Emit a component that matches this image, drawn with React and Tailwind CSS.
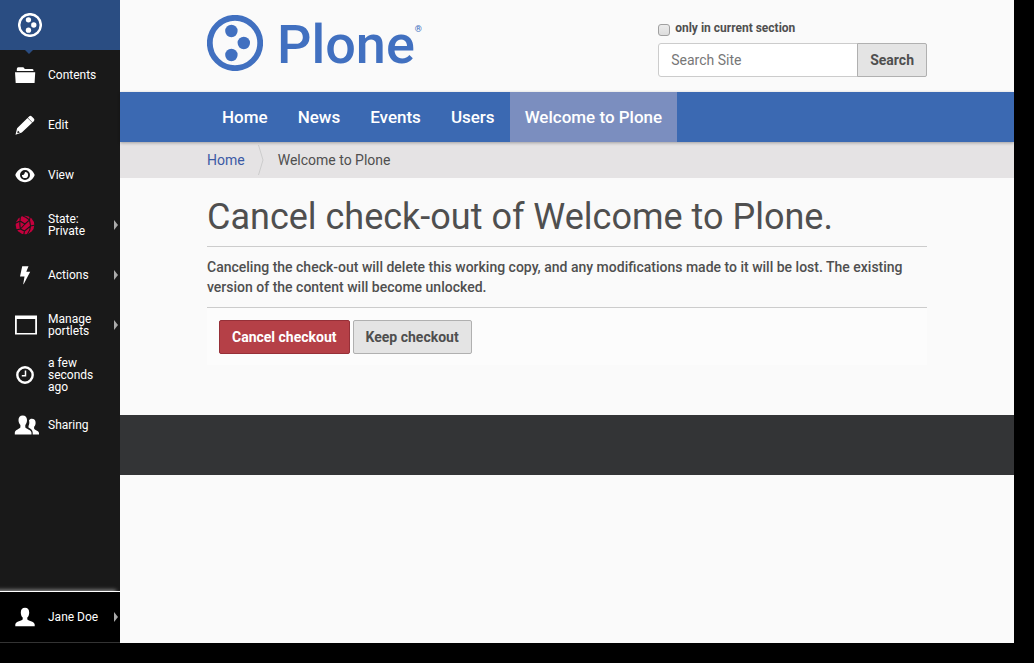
import React from "react";

function PloneMark({ className }) {
  return (
    <svg viewBox="0 0 56 56" className={className} fill="currentColor" aria-hidden="true">
      <circle cx="28" cy="28" r="25.2" fill="none" stroke="currentColor" strokeWidth="5.8" />
      <circle cx="24.4" cy="16" r="6.2" />
      <circle cx="36.8" cy="28" r="6.2" />
      <circle cx="24.4" cy="40" r="6.2" />
    </svg>
  );
}

const icons = {
  folder: (
    <>
      <path d="M3.800 4Q3.800 2.200 5.300 2.200H9.800q1 0 1.500 1l.4.800H19q1.500 0 1.500 1.400V6H3.800z" />
      <path d="M2 7.300H22.200L21.600 18H2.700z" />
    </>
  ),
  pencil: (
    <>
      <path d="M16.300 1.200q1.200-1 2.500.2l2 2q1.200 1.200.2 2.500l-1.500 1.500-4.700-4.700z" />
      <path d="M14.500 3l4.700 4.700L8.800 17.600 2.500 19.800 4.100 13.300zM4.900 15.600l-.7 2.600L6.900 17.400z" fillRule="evenodd" />
    </>
  ),
  eye: (
    <path
      fillRule="evenodd"
      d="M12 2.800c5 0 8.200 3.400 9.700 7.200-1.500 3.800-4.700 7.200-9.700 7.200S3.800 13.800 2.300 10C3.800 6.200 7 2.800 12 2.800zM12 5a5 5 0 1 0 0 10 5 5 0 0 0 0-10zM12 6.900a3.100 3.100 0 1 1-3.100 3.100q2.600.2 3.100-3.100z"
    />
  ),
  state: (
    <>
      <circle cx="12" cy="10" r="9.300" fill="#c4003d" />
      <path
        d="M2 8.500l5-2.500 5 3 4.500-4 1-5M7 6L7.500 0M7 6q-.5 4 .5 8l-5 1M12 9l-4.500 5 4 2 6-5 5-1M11.500 16l-1 5M16.500 5l1 6q0 4-3 8M10 1q3 1 6.500 4"
        fill="none"
        stroke="#191919"
        strokeWidth="1.100"
      />
    </>
  ),
  bolt: <path d="M9.200 1.200h6.300L13.300 6.800H17.200L10.500 19.500 10.300 18.800 11.500 11.500H7z" />,
  frame: <path fillRule="evenodd" d="M2 .5h22V19.500H2zM3.800 4V18H22.200V4z" />,
  clock: (
    <>
      <circle cx="12" cy="10" r="7.700" fill="none" stroke="currentColor" strokeWidth="2.400" />
      <path d="M12.500 5.500v5.200H8.800" fill="none" stroke="currentColor" strokeWidth="1.500" />
    </>
  ),
  users: (
    <>
      <path d="M9.700.5c2.800 0 4.300 1.800 4.300 4.600 0 2-.6 3.700-1.700 4.900v2.200c0 1.600 6.200 2.300 6.200 5.500v1.800H1.800v-1.800c0-3.200 5.600-3.900 5.600-5.500V10C6.200 8.800 5.500 7.100 5.500 5.100 5.500 2.300 6.900.5 9.700.5z" />
      <path d="M16 5.500c.6-1.100 1.500-1.700 2.800-1.700 2.500 0 3.800 1.600 3.800 4 0 1.700-.5 3-1.500 4v1.700c0 1.600 4.900 2 4.900 4.700v1.300h-6.300v-1.800c0-2.400-2-4-4.200-5.100v-1.600c.8-1.600 1.100-3.400.5-5.500z" />
    </>
  ),
  user: (
    <path d="M12 .8c2.800 0 4.200 1.700 4.200 4.600 0 2.200-.7 4-1.900 5.200v1.700c0 1.700 7.400 2 7.400 5.200v1.700H2.300v-1.700c0-3.200 7.400-3.500 7.400-5.200v-1.700C8.500 9.400 7.800 7.600 7.800 5.400 7.800 2.500 9.200.8 12 .8z" />
  ),
};

function ToolbarItem({ icon, label, menu }) {
  return (
    <a href="#" className="flex h-[50px] items-center pl-[13px] pr-0.5 text-xs leading-3 text-white">
      <svg viewBox="0 0 26 20" className="h-5 w-[26px] shrink-0" fill="currentColor" aria-hidden="true">
        {icons[icon]}
      </svg>
      <span className="ml-[9px] flex-1">{label}</span>
      {menu && (
        <svg viewBox="0 0 4 8" preserveAspectRatio="none" className="h-2.5 w-1 shrink-0 text-[#aaaaaa]" fill="currentColor" aria-hidden="true">
          <path d="M0 0L4 4 0 8z" />
        </svg>
      )}
    </a>
  );
}

const tools = [
  { icon: "folder", label: "Contents" },
  { icon: "pencil", label: "Edit" },
  { icon: "eye", label: "View" },
  { icon: "state", label: <>State:<br />Private</>, menu: true },
  { icon: "bolt", label: "Actions", menu: true },
  { icon: "frame", label: <>Manage<br />portlets</>, menu: true },
  { icon: "clock", label: <>a few<br />seconds<br />ago</> },
  { icon: "users", label: "Sharing" },
];

function Toolbar() {
  return (
    <aside className="flex w-[120px] shrink-0 flex-col bg-[#191919]">
      <a href="#" aria-label="Plone" className="relative flex h-[50px] items-center bg-[#2a4d82] pl-[18px] text-white">
        <PloneMark className="size-6" />
        <svg viewBox="0 0 8 4" className="absolute left-[25px] top-[50px] h-1 w-2 text-[#2a4d82]" fill="currentColor" aria-hidden="true">
          <path d="M0 0H8L4 4z" />
        </svg>
      </a>
      <nav aria-label="Toolbar">
        {tools.map((tool) => (
          <ToolbarItem key={tool.icon} {...tool} />
        ))}
      </nav>
      <div className="mt-auto overflow-hidden pt-2">
        <div className="border-b border-t border-b-[#333333] border-t-white bg-black shadow-[-4px_-1px_4px_#999999]">
          <ToolbarItem icon="user" label="Jane Doe" menu />
        </div>
      </div>
    </aside>
  );
}

function Container({ className = "", children }) {
  return <div className={`mx-auto w-full max-w-[750px] px-[15px] ${className}`}>{children}</div>;
}

const sections = ["Home", "News", "Events", "Users", "Welcome to Plone"];

export default function App() {
  return (
    <div className="flex min-h-screen bg-black pb-5 pr-5 font-[Roboto,sans-serif] text-sm leading-5 text-[#4f4f4f]">
      <Toolbar />
      <div className="min-w-0 flex-1 bg-[#fafafa]">
        <header>
          <Container className="flex h-[92px] justify-between">
            <a href="#" aria-label="Plone" className="flex h-[86px] items-center gap-3.5 text-[#4170c0]">
              <PloneMark className="size-14" />
              <span className="flex pt-1 text-[54px] font-medium leading-[56px]">
                Plone
                <span className="pt-1.5 text-[9px] leading-3">®</span>
              </span>
            </a>
            <form className="pt-[18px]" onSubmit={(e) => e.preventDefault()}>
              <label className="flex h-5 items-center text-xs font-bold">
                <input
                  type="checkbox"
                  className="mr-[5px] mt-1 size-3 appearance-none rounded-[3px] border border-[#a0a0a0] bg-gradient-to-b from-[#ececec] to-[#dddddd]"
                />
                only in current section
              </label>
              <div className="mt-[5px] flex">
                <input
                  type="text"
                  aria-label="Search Site"
                  placeholder="Search Site"
                  className="h-[34px] w-[200px] rounded-l-[3px] border border-[#cccccc] bg-white px-3 text-sm placeholder:text-[#777777]"
                />
                <button className="-ml-px h-[34px] rounded-r-[2px] border border-[#b0b0b0] bg-[#e4e4e4] px-3 font-bold">
                  Search
                </button>
              </div>
            </form>
          </Container>
        </header>
        <nav aria-label="Sections" className="relative bg-[#3b69b2] shadow-[0_1px_3px_rgba(0,0,0,0.3)]">
          <Container className="flex">
            {sections.map((name) => (
              <a
                key={name}
                href="#"
                className={`px-[15px] py-[15px] text-[17px] font-medium text-white ${name === "Welcome to Plone" ? "bg-[#7b8ebf]" : ""}`}
              >
                {name}
              </a>
            ))}
          </Container>
        </nav>
        <nav aria-label="Breadcrumbs" className="bg-[#e5e3e4]">
          <Container className="flex h-9 items-center">
            <a href="#" className="text-[#3b5aa5]">Home</a>
            <svg viewBox="0 0 6 30" className="ml-[13px] mr-3.5 h-[30px] w-1.5" aria-hidden="true">
              <path d="M.5 0L5 15 .5 30" fill="none" stroke="#cccccc" />
            </svg>
            <span>Welcome to Plone</span>
          </Container>
        </nav>
        <main className="pb-[50px] pt-[19px]">
          <Container>
            <h1 className="border-b border-[#cccccc] pb-[9px] text-4xl leading-10">
              Cancel check-out of Welcome to Plone.
            </h1>
            <p className="py-2.5 font-medium">
              Canceling the check-out will delete this working copy, and any modifications made to it will be lost. The
              existing version of the content will become unlocked.
            </p>
            <form
              className="flex gap-[3px] border-t border-[#cccccc] bg-[#fcfcfc] p-3 pb-[11px]"
              onSubmit={(e) => e.preventDefault()}
            >
              <button className="h-[34px] rounded-[2px] border border-[#963038] bg-[#b54047] px-3 font-bold text-white">
                Cancel checkout
              </button>
              <button className="h-[34px] rounded-[2px] border border-[#b0b0b0] bg-[#e4e4e4] px-3 font-bold">
                Keep checkout
              </button>
            </form>
          </Container>
        </main>
        <footer className="h-[60px] bg-[#333436]" />
      </div>
    </div>
  );
}
